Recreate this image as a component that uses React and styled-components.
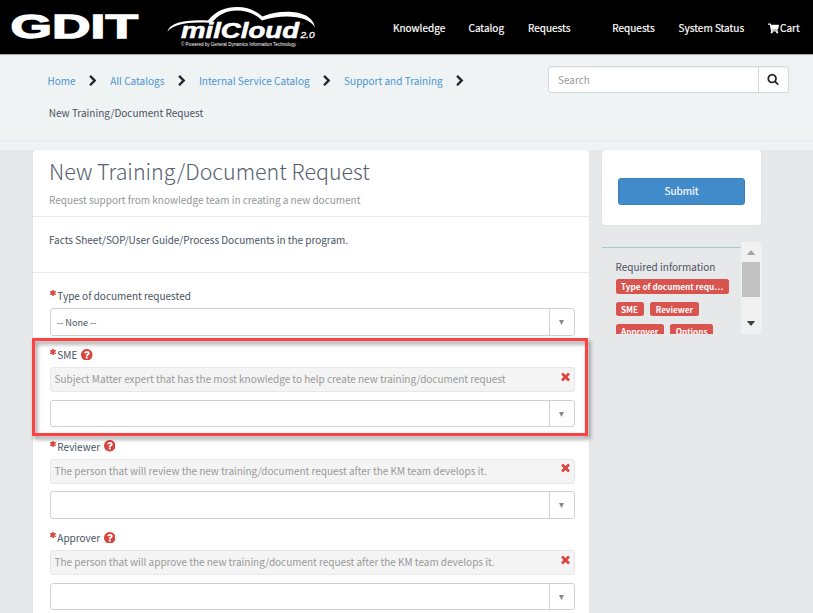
import React from "react";
import styled, { createGlobalStyle } from "styled-components";
import { FaShoppingCart } from "react-icons/fa";

const GlobalStyle = createGlobalStyle`
  * { box-sizing: border-box; }
  html, body { margin: 0; padding: 0; overflow: hidden; }
  body {
    background: #e7e8ea;
    color: #485260;
    font: 10px/16px "Noto Sans CJK SC", "Open Sans", sans-serif;
    font-kerning: normal;
  }
  button, input { font: inherit; }
`;

const Page = styled.div`
  width: 813px;
  height: 613px;
  overflow: hidden;
  display: flex;
  flex-direction: column;
`;

/* Header */
const Header = styled.header`
  flex: none;
  display: flex;
  height: 55px;
  background: #000;
  border-bottom: 1px solid #a2a4a8;
`;

const Brand = styled.div`
  width: 393px;
  svg { display: block; }
`;

const LogoText = styled.text`
  font-family: "Liberation Sans", Arial, sans-serif;
  font-weight: ${(p) => p.$weight || 700};
  font-style: ${(p) => (p.$italic ? "italic" : "normal")};
  font-size: ${(p) => p.$size}px;
  fill: #fff;
`;

const Nav = styled.nav`
  display: flex;
  align-items: center;
  height: 54px;
  padding-top: 2px;
`;

const NavLink = styled.a`
  display: flex;
  align-items: center;
  gap: 1.5px;
  width: ${(p) => p.$width}px;
  color: #fff;
  white-space: nowrap;
  -webkit-text-stroke: 0.2px #fff;
`;

/* Breadcrumb band */
const Band = styled.div`
  flex: none;
  display: flex;
  justify-content: space-between;
  height: 86px;
  padding: 11px 24px 0 47.5px;
  background: #eff3f4;
  border-bottom: 1px solid #e6ebf0;
`;

const BandFoot = styled.div`
  flex: none;
  height: 9px;
  background: #eef3f7;
`;

const Crumbs = styled.div`
  display: flex;
  flex-direction: column;
  padding-top: 7px;
  gap: 16px;
`;

const CrumbRow = styled.div`
  display: flex;
  align-items: center;
  height: 16px;
  white-space: nowrap;
`;

const CrumbLink = styled.a`
  color: #4b93d1;
`;

const CrumbGap = styled.span`
  display: flex;
  justify-content: center;
  width: 34.5px;
  svg { width: 12px; height: 12px; margin: 0 0 1px 1px; }
`;

const CrumbCurrent = styled.span`
  padding-left: 1.3px;
`;

const SearchBox = styled.form`
  display: flex;
  width: 241px;
  height: 27.4px;
  background: #fff;
  border: 1px solid #d5d9db;
  border-radius: 3px;
  box-shadow: inset 0 1px 1px rgba(0, 0, 0, 0.05);
`;

const SearchInput = styled.input`
  flex: 1;
  min-width: 0;
  padding: 0 9px 0 9px;
  border: 0;
  background: none;
  outline: 0;
  &::placeholder { color: #999; opacity: 1; }
`;

const SearchButton = styled.button`
  display: flex;
  align-items: center;
  justify-content: center;
  width: 30.5px;
  padding: 0 1px 2px 0;
  border: 0;
  border-left: 1px solid #d5d9db;
  background: none;
  svg { width: 12px; height: 12px; }
`;

/* Body */
const Main = styled.main`
  flex: 1;
  min-height: 0;
  display: flex;
  align-items: flex-start;
  gap: 13px;
  padding-left: 33px;
`;

const Card = styled.section`
  width: 556px;
  height: 480px;
  flex: none;
  position: relative;
  background: #fff;
  border-radius: 3px 3px 0 0;
  box-shadow: 0 0 1px rgba(0, 0, 0, 0.2);
`;

const CardHead = styled.div`
  height: 66.5px;
  padding: 8px 16px 0;
  border-bottom: 1px solid #e8e9eb;
`;

const Title = styled.h1`
  margin: 0;
  color: #566070;
  font-size: 21.45px;
  font-weight: 300;
  line-height: 26px;
  white-space: nowrap;
`;

const Subtitle = styled.p`
  margin: 8px 0 0;
  color: #949698;
  letter-spacing: -0.02px;
`;

const Description = styled.div`
  height: 56px;
  padding: 15.5px 16px 0;
  border-bottom: 1px solid #e8e9eb;
  letter-spacing: -0.02px;
`;

const Form = styled.div`
  padding: 15.5px 14px 0 17px;
`;

const Field = styled.div`
  height: ${(p) => (p.$short ? "59px" : "91.5px")};
`;

const Label = styled.label`
  display: flex;
  align-items: center;
  height: 16px;
  gap: 1.3px;
  white-space: nowrap;
`;

const Star = styled.svg`
  width: 6px;
  height: 6px;
  margin-bottom: 6px;
`;

const Help = styled.svg`
  width: 11.5px;
  height: 11.5px;
  margin: 0 0 1px 2.5px;
  fill: #d9443f;
`;

const Hint = styled.div`
  display: flex;
  justify-content: space-between;
  height: 25px;
  margin-top: 4.3px;
  padding: 3px 3px 0 3.5px;
  border: 1px solid #e6e7e8;
  border-radius: 3px;
  background: #f4f4f4;
  color: #999;
  letter-spacing: -0.02px;
  white-space: nowrap;
`;

const Close = styled.svg`
  width: 11px;
  height: 11px;
  margin-top: -0.7px;
  fill: #d9443f;
`;

const Select = styled.div`
  display: flex;
  height: 27.5px;
  margin-top: ${(p) => (p.$short ? "4px" : "7.5px")};
  border: 1px solid #cfd1d3;
  border-radius: 3px;
  background: #fff;
`;

const Value = styled.div`
  flex: 1;
  padding: 4.5px 6px 0;
  font-size: 9.1px;
`;

const Arrow = styled.div`
  display: flex;
  align-items: center;
  justify-content: center;
  width: 25px;
  padding: 1px 1px 0 0;
  border-left: 1px solid #cfd1d3;
  svg { width: 5px; height: 5px; fill: #888; }
`;

const Highlight = styled.div`
  position: absolute;
  left: -1px;
  top: 188px;
  width: 556px;
  height: 98px;
  border: 3px solid #fb4344;
  filter: drop-shadow(2px 3px 2px rgba(0, 0, 0, 0.45));
  pointer-events: none;
`;

/* Sidebar */
const Side = styled.aside`
  width: 160px;
`;

const SubmitCard = styled.div`
  width: 159px;
  height: 75px;
  padding: 28px 16px 0;
  background: #fff;
  border-radius: 3px;
  box-shadow: 0 0 1px rgba(0, 0, 0, 0.2);
`;

const SubmitButton = styled.button`
  display: block;
  width: 127px;
  height: 27px;
  padding: 0 0 1px;
  border: 1px solid #3a80bd;
  border-radius: 3px;
  background: #428bca;
  color: #fff;
  -webkit-text-stroke: 0.15px #fff;
`;

const Required = styled.div`
  display: flex;
  height: 92px;
  margin-top: 17px;
  overflow: hidden;
`;

const RequiredBody = styled.div`
  width: 139px;
  height: 120px;
  margin-top: 5px;
  padding: 11px 0 0 13.5px;
  border-top: 1px solid ${(p) => p.$line};
`;

const Tags = styled.div`
  display: flex;
  flex-wrap: wrap;
  gap: 8px 6.5px;
  margin-top: 4.3px;
`;

const Tag = styled.span`
  height: 14.3px;
  padding: 0 5.5px;
  border-radius: 2.5px;
  background: #d9534f;
  color: #fff;
  font-size: 8.2px;
  font-weight: 700;
  line-height: 14px;
  white-space: nowrap;
`;

const Scrollbar = styled.div`
  display: flex;
  flex-direction: column;
  align-items: center;
  justify-content: space-between;
  width: 20.5px;
  height: 92px;
  padding: 8px 1px 8px;
  background: #f1f1f1;
  svg { width: 10px; height: 5px; flex: none; }
`;

const Thumb = styled.div`
  width: 18px;
  height: 35px;
  margin-bottom: 17px;
  background: #c1c1c1;
`;

const Chevron = () => (
  <svg viewBox="0 0 1792 1792" fill="#1f2730">
    <path d="M1363 877l-742 742q-19 19-45 19t-45-19l-166-166q-19-19-19-45t19-45l531-531-531-531q-19-19-19-45t19-45l166-166q19-19 45-19t45 19l742 742q19 19 19 45t-19 45z" />
  </svg>
);

const SearchIcon = () => (
  <svg viewBox="0 0 1792 1792" fill="#222">
    <path d="M1216 832q0-185-131.500-316.500t-316.500-131.500-316.500 131.500-131.500 316.500 131.500 316.500 316.500 131.500 316.500-131.500 131.500-316.500zm512 832q0 52-38 90t-90 38q-54 0-90-38l-343-342q-179 124-399 124-143 0-273.500-55.500t-225-150-150-225-55.500-273.500 55.500-273.500 150-225 225-150 273.500-55.500 273.500 55.500 225 150 150 225 55.500 273.500q0 220-124 399l343 343q37 37 37 90z" />
  </svg>
);

const HelpIcon = () => (
  <Help viewBox="128 128 1536 1536">
    <path d="M1024 1376v-192q0-14-9-23t-23-9h-192q-14 0-23 9t-9 23v192q0 14 9 23t23 9h192q14 0 23-9t9-23zm256-672q0-88-55.500-163t-138.500-116-170-41q-243 0-371 213-15 24 8 42l132 100q7 6 19 6 16 0 25-12 53-68 86-92 34-24 86-24 48 0 85.500 26t37.500 59q0 38-20 61t-68 45q-63 28-115.500 86.500t-52.500 125.500v36q0 14 9 23t23 9h192q14 0 23-9t9-23q0-19 21.500-49.500t54.500-49.500q32-18 49-28.500t46-35 44.500-48 28-60.500 12.500-81zm384 192q0 209-103 385.500t-279.500 279.500-385.500 103-385.500-103-279.500-279.500-103-385.500 103-385.500 279.500-279.500 385.500-103 385.500 103 279.500 279.500 103 385.500z" />
  </Help>
);

const CloseIcon = () => (
  <Close viewBox="128 128 1536 1536">
    <path d="M1490 1322q0 40-28 68l-136 136q-28 28-68 28t-68-28l-294-294-294 294q-28 28-68 28t-68-28l-136-136q-28-28-28-68t28-68l294-294-294-294q-28-28-28-68t28-68l136-136q28-28 68-28t68 28l294 294 294-294q28-28 68-28t68 28l136 136q28 28 28 68t-28 68l-294 294 294 294q28 28 28 68z" />
  </Close>
);

const StarIcon = () => (
  <Star viewBox="0 0 12 12">
    <path d="M6 1v10M1.700 3.500l8.600 5M1.700 8.500l8.600-5" stroke="#d9443f" strokeWidth="3.200" strokeLinecap="round" />
  </Star>
);

const Logos = () => (
  <svg width="330" height="54" viewBox="0 0 330 54">
    <g transform="translate(10.500 38.300) scale(1.500 1)">
      <LogoText $size={34} x="0" y="0" textLength="85" lengthAdjust="spacingAndGlyphs" stroke="#fff" strokeWidth="1.300">
        GDIT
      </LogoText>
    </g>
    <path
      d="M167.500 31.500C170 24 181 19.500 208 20.500C216 10.500 226 7 237 7C248 7 255 10.500 262.500 16.500C280 9 312 9 315 27.500C309 15.500 283 13.500 262 20.500C254 13 246 10.500 237 10.500C227 10.500 219 14 211.500 23C188 21.500 174 24 167.500 31.500Z"
      fill="#fff"
    />
    <LogoText $size={22.5} $italic x="181" y="37.500" textLength="118" lengthAdjust="spacingAndGlyphs" stroke="#fff" strokeWidth="0.600">
      milCloud
    </LogoText>
    <LogoText $size={9.8} $weight={400} $italic x="300.500" y="38" textLength="14" lengthAdjust="spacingAndGlyphs" stroke="#fff" strokeWidth="0.300">
      2.0
    </LogoText>
    <LogoText $size={2.5} $weight={400} x="301.500" y="25">
      ®
    </LogoText>
    <LogoText $size={4.5} $weight={400} x="181" y="46" textLength="115" lengthAdjust="spacingAndGlyphs">
      © Powered by General Dynamics Information Technology
    </LogoText>
  </svg>
);

const links = [
  { text: "Knowledge", width: 75.5 },
  { text: "Catalog", width: 59.5 },
  { text: "Requests", width: 84.3 },
  { text: "Requests", width: 66.3 },
  { text: "System Status", width: 89 },
];

const crumbs = ["Home", "All Catalogs", "Internal Service Catalog", "Support and Training"];

const fields = [
  { label: "Type of document requested", value: "-- None --" },
  {
    label: "SME",
    hint: "Subject Matter expert that has the most knowledge to help create new training/document request",
  },
  {
    label: "Reviewer",
    hint: "The person that will review the new training/document request after the KM team develops it.",
  },
  {
    label: "Approver",
    hint: "The person that will approve the new training/document request after the KM team develops it.",
  },
];

const tags = ["Type of document requ…", "SME", "Reviewer", "Approver", "Options"];

export default function App() {
  return (
    <Page>
      <GlobalStyle />
      <Header>
        <Brand>
          <Logos />
        </Brand>
        <Nav>
          {links.map((l, i) => (
            <NavLink key={i} $width={l.width}>
              {l.text}
            </NavLink>
          ))}
          <NavLink $width={34}>
            <FaShoppingCart size={11} />
            Cart
          </NavLink>
        </Nav>
      </Header>
      <Band>
        <Crumbs>
          <CrumbRow>
            {crumbs.map((c) => (
              <React.Fragment key={c}>
                <CrumbLink>{c}</CrumbLink>
                <CrumbGap>
                  <Chevron />
                </CrumbGap>
              </React.Fragment>
            ))}
          </CrumbRow>
          <CrumbRow>
            <CrumbCurrent>New Training/Document Request</CrumbCurrent>
          </CrumbRow>
        </Crumbs>
        <SearchBox>
          <SearchInput placeholder="Search" />
          <SearchButton type="button" aria-label="Search">
            <SearchIcon />
          </SearchButton>
        </SearchBox>
      </Band>
      <BandFoot />
      <Main>
        <Card>
          <CardHead>
            <Title>New Training/Document Request</Title>
            <Subtitle>Request support from knowledge team in creating a new document</Subtitle>
          </CardHead>
          <Description>Facts Sheet/SOP/User Guide/Process Documents in the program.</Description>
          <Form>
            {fields.map((f) => (
              <Field key={f.label} $short={!f.hint}>
                <Label>
                  <StarIcon />
                  {f.label}
                  {f.hint && <HelpIcon />}
                </Label>
                {f.hint && (
                  <Hint>
                    {f.hint}
                    <CloseIcon />
                  </Hint>
                )}
                <Select $short={!f.hint}>
                  <Value>{f.value}</Value>
                  <Arrow>
                    <svg viewBox="0 0 10 10">
                      <path d="M0 0h10L5 10z" />
                    </svg>
                  </Arrow>
                </Select>
              </Field>
            ))}
          </Form>
          <Highlight />
        </Card>
        <Side>
          <SubmitCard>
            <SubmitButton>Submit</SubmitButton>
          </SubmitCard>
          <Required>
            <RequiredBody $line="#9fcbdc">
              Required information
              <Tags>
                {tags.map((t) => (
                  <Tag key={t}>{t}</Tag>
                ))}
              </Tags>
            </RequiredBody>
            <Scrollbar>
              <svg viewBox="0 0 10 6">
                <path d="M0 6L5 0l5 6z" fill="#a3a3a3" />
              </svg>
              <Thumb />
              <svg viewBox="0 0 10 6">
                <path d="M0 0h10L5 6z" fill="#404040" />
              </svg>
            </Scrollbar>
          </Required>
        </Side>
      </Main>
    </Page>
  );
}
